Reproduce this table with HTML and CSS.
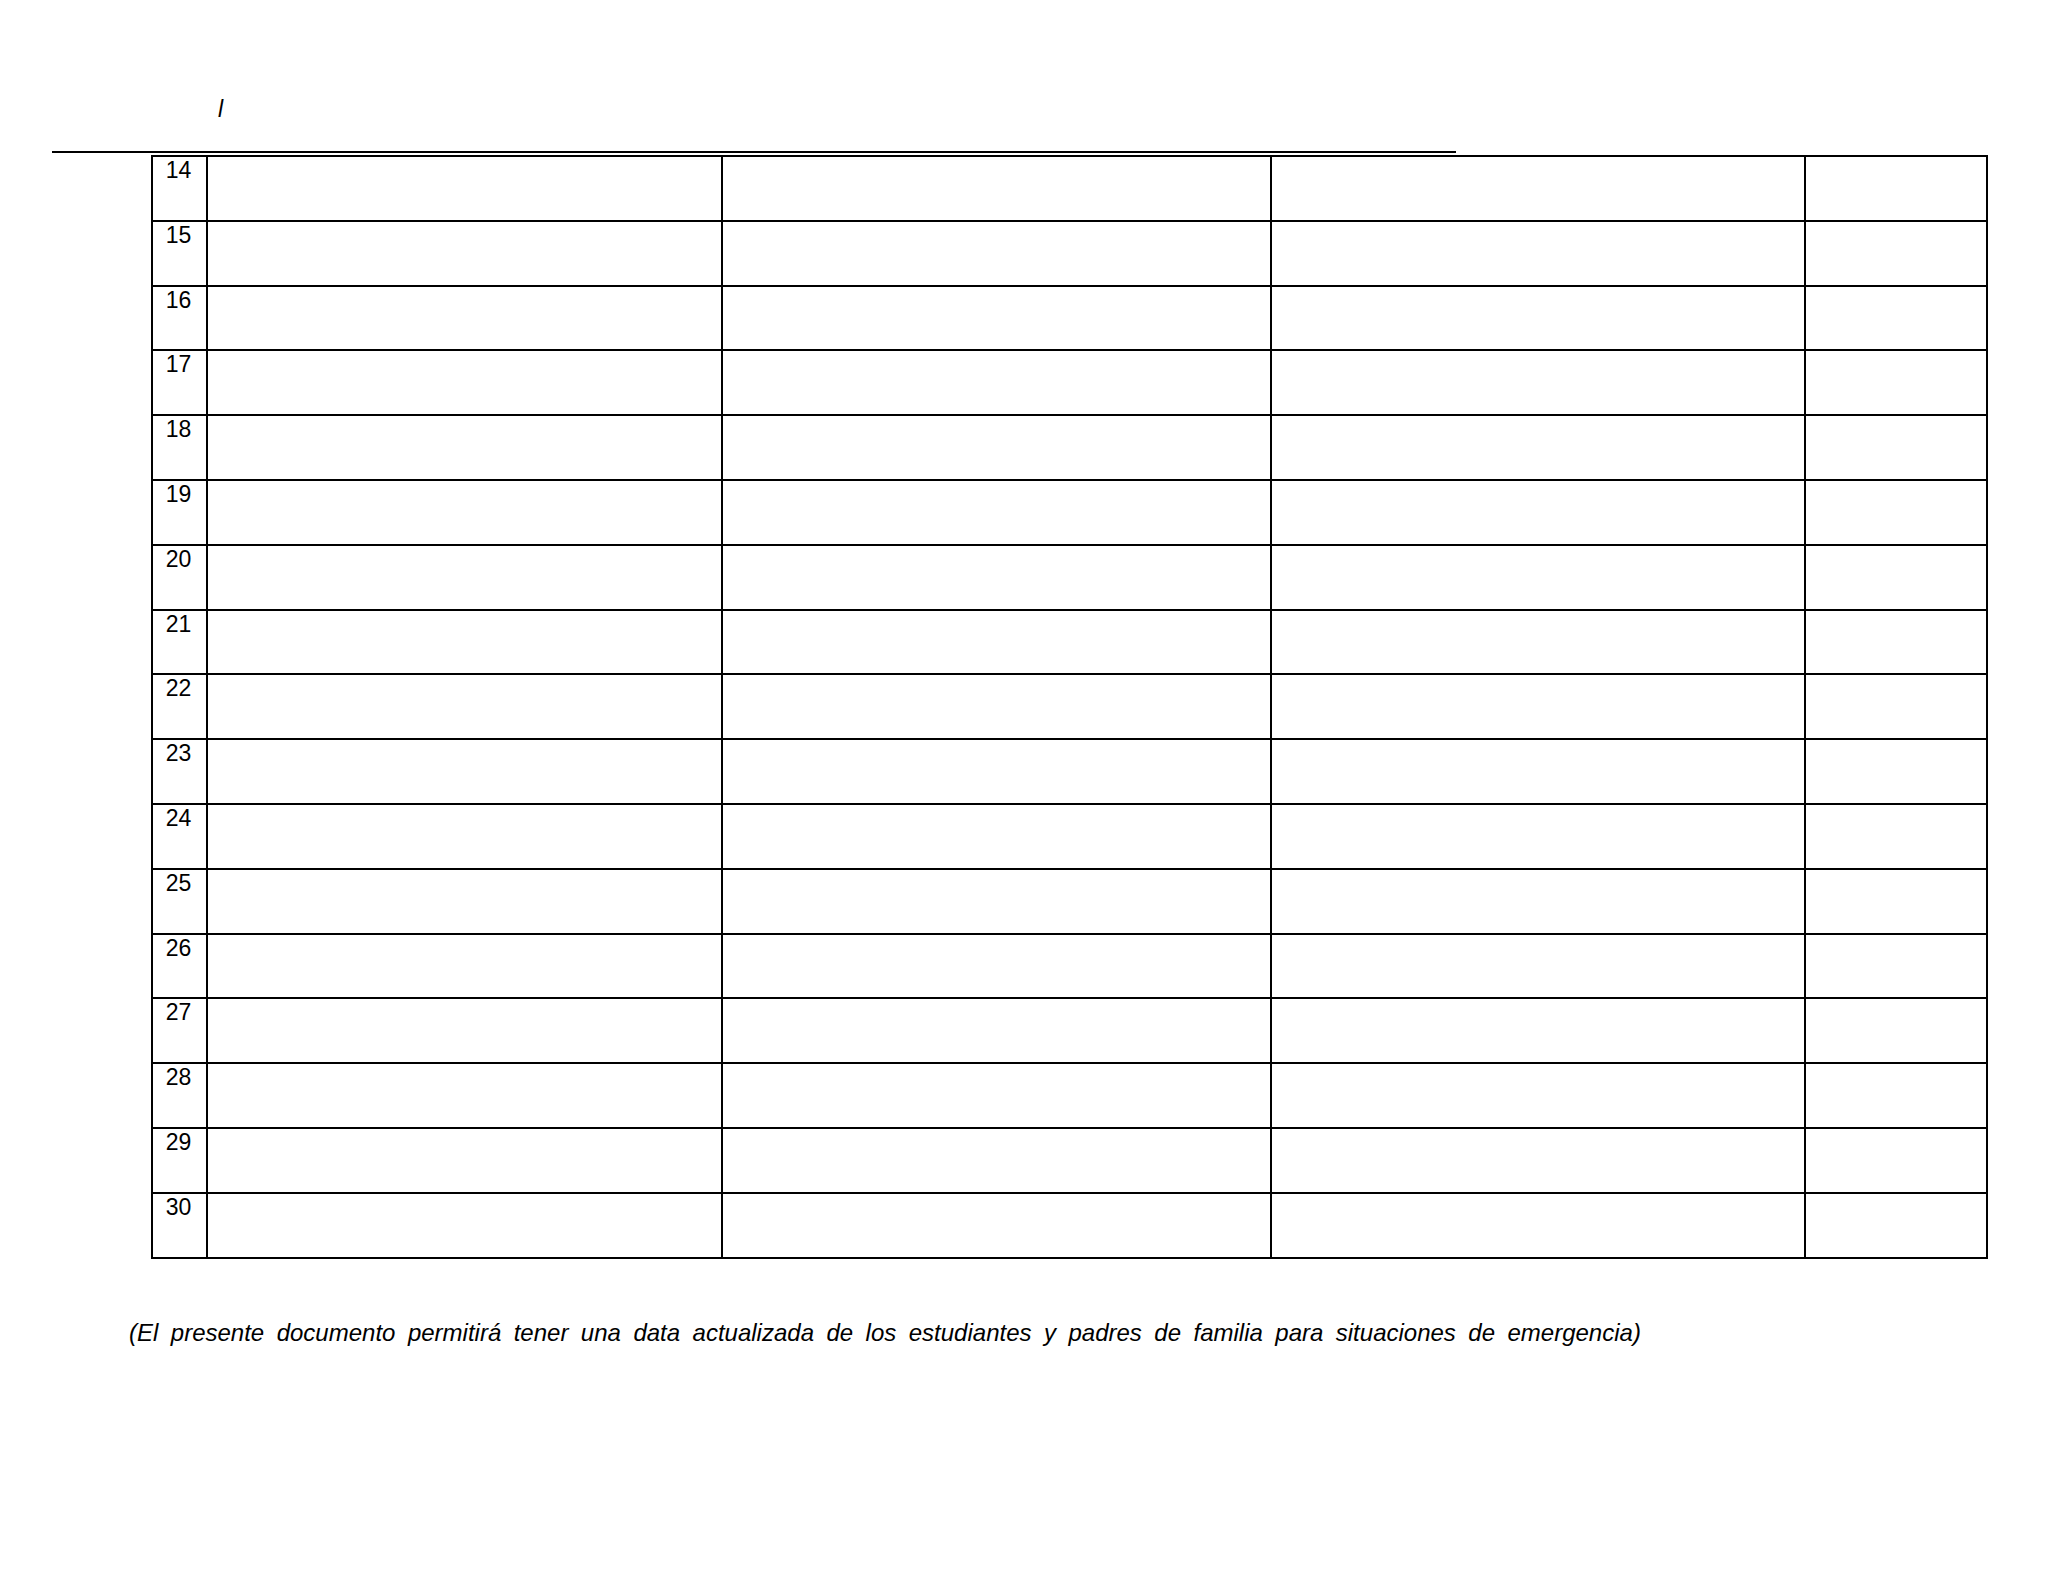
FILE: index.html
```html
<!DOCTYPE html>
<html lang="es">
<head>
<meta charset="utf-8">
<title>Registro</title>
<link rel="stylesheet" href="styles.css">
</head>
<body>
<div class="sheet">
  <div class="mark">l</div>
  <div class="rule"></div>
  <table class="grid">
    <colgroup>
      <col class="c-num">
      <col class="c-a">
      <col class="c-b">
      <col class="c-c">
      <col class="c-d">
    </colgroup>
    <tbody>
      <tr><td class="num">14</td><td></td><td></td><td></td><td></td></tr>
      <tr><td class="num">15</td><td></td><td></td><td></td><td></td></tr>
      <tr><td class="num">16</td><td></td><td></td><td></td><td></td></tr>
      <tr><td class="num">17</td><td></td><td></td><td></td><td></td></tr>
      <tr><td class="num">18</td><td></td><td></td><td></td><td></td></tr>
      <tr><td class="num">19</td><td></td><td></td><td></td><td></td></tr>
      <tr><td class="num">20</td><td></td><td></td><td></td><td></td></tr>
      <tr><td class="num">21</td><td></td><td></td><td></td><td></td></tr>
      <tr><td class="num">22</td><td></td><td></td><td></td><td></td></tr>
      <tr><td class="num">23</td><td></td><td></td><td></td><td></td></tr>
      <tr><td class="num">24</td><td></td><td></td><td></td><td></td></tr>
      <tr><td class="num">25</td><td></td><td></td><td></td><td></td></tr>
      <tr><td class="num">26</td><td></td><td></td><td></td><td></td></tr>
      <tr><td class="num">27</td><td></td><td></td><td></td><td></td></tr>
      <tr><td class="num">28</td><td></td><td></td><td></td><td></td></tr>
      <tr><td class="num">29</td><td></td><td></td><td></td><td></td></tr>
      <tr><td class="num">30</td><td></td><td></td><td></td><td></td></tr>
    </tbody>
  </table>
  <p class="note">(El presente documento permitirá tener una data actualizada de los estudiantes y padres de familia para situaciones de emergencia)</p>
</div>
</body>
</html>
```

FILE: styles.css
```css
html, body {
  margin: 0;
  padding: 0;
  background: #ffffff;
}

body {
  font-family: "Liberation Sans", Arial, sans-serif;
  color: #000000;
}

.sheet {
  width: 2048px;
  min-height: 1582px;
  padding-top: 96px;
  box-sizing: border-box;
}

.mark {
  margin: 0 0 0 218px;
  font-style: italic;
  font-size: 23px;
  line-height: 26px;
  height: 26px;
}

.rule {
  margin: 29px 0 0 52px;
  width: 1404px;
  height: 0;
  border-top: 2px solid #000;
}

.grid {
  margin: 2px 0 0 151px;
  width: 1835px;
  table-layout: fixed;
  border-collapse: collapse;
}

.c-num { width: 55px; }
.c-a { width: 515px; }
.c-b { width: 549px; }
.c-c { width: 534px; }
.c-d { width: 182px; }

.grid td {
  border: 2px solid #000;
  height: 61.8px;
  padding: 1px 0 0 0;
  vertical-align: top;
  font-size: 23px;
  line-height: 24px;
}

.grid td.num {
  text-align: center;
  padding-right: 2px;
}

.note {
  margin: 61px 0 0 129px;
  font-style: italic;
  font-size: 24px;
  line-height: 26px;
  word-spacing: 5.8px;
}
```
